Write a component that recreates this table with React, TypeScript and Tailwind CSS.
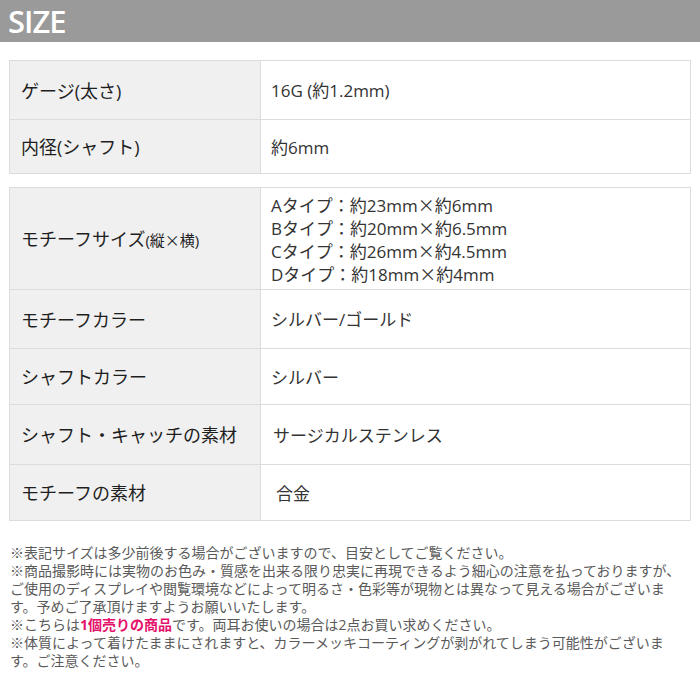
import React from "react";

const font = { fontFamily: "'Open Sans', 'Noto Sans CJK JP', sans-serif" };

const X = () => <span className="font-['Noto_Sans_CJK_JP',sans-serif]">×</span>;

type Row = { label: React.ReactNode; value: React.ReactNode; h: string; vp?: string };

const rows1: Row[] = [
  { label: "ゲージ(太さ)", value: "16G (約1.2mm)", h: "h-[58px]" },
  { label: "内径(シャフト)", value: "約6mm", h: "h-[54px]" },
];

const rows2: Row[] = [
  {
    label: (
      <>
        モチーフサイズ<span className="text-[15px]">(縦<X />横)</span>
      </>
    ),
    value: (
      <div className="leading-[22px]">
        <div>Aタイプ：約23mm<X />約6mm</div>
        <div>Bタイプ：約20mm<X />約6.5mm</div>
        <div>Cタイプ：約26mm<X />約4.5mm</div>
        <div>Dタイプ：約18mm<X />約4mm</div>
      </div>
    ),
    h: "h-[101px]",
  },
  { label: "モチーフカラー", value: "シルバー/ゴールド", h: "h-[59px]" },
  { label: "シャフトカラー", value: "シルバー", h: "h-[56px]" },
  { label: "シャフト・キャッチの素材", value: "サージカルステンレス", h: "h-[60px]", vp: "pl-[12px]" },
  { label: "モチーフの素材", value: "合金", h: "h-[56px]", vp: "pl-[15px]" },
];

function Table({ rows }: { rows: Row[] }) {
  return (
    <div className="mx-[9px] border border-[#dcdcdc]">
      {rows.map((r, i) => (
        <div
          key={i}
          className={`flex ${r.h} ${i > 0 ? "border-t border-[#dcdcdc]" : ""}`}
        >
          <div className="w-[251px] shrink-0 bg-[#f0f0f0] border-r border-[#dcdcdc] flex items-center pl-[11px] pt-[2px] text-[18px] font-normal text-[#1e1e1e] whitespace-nowrap">
            <span>{r.label}</span>
          </div>
          <div className={`flex-1 flex items-center ${r.vp ?? "pl-[10px]"} pt-[2px] text-[17px] text-[#333]`}>
            {r.value}
          </div>
        </div>
      ))}
    </div>
  );
}

export default function App() {
  return (
    <div className="w-[700px] h-[700px] bg-white" style={font}>
      <div className="h-[42px] bg-[#9a9a9a] flex items-center pl-[8px]">
        <span className="text-white text-[31px] font-semibold tracking-[-1px] leading-none">SIZE</span>
      </div>
      <div className="mt-[18px]">
        <Table rows={rows1} />
      </div>
      <div className="mt-[13px]">
        <Table rows={rows2} />
      </div>
      <div className="mt-[23px] pl-[10px] text-[14px] leading-[18px] text-[#5a5a5a] whitespace-nowrap">
        <div>※表記サイズは多少前後する場合がございますので、目安としてご覧ください。</div>
        <div>※商品撮影時には実物のお色み・質感を出来る限り忠実に再現できるよう細心の注意を払っておりますが、</div>
        <div>ご使用のディスプレイや閲覧環境などによって明るさ・色彩等が現物とは異なって見える場合がございま</div>
        <div>す。予めご了承頂けますようお願いいたします。</div>
        <div>
          ※こちらは<span className="text-[#e4126b] font-bold">1個売りの商品</span>です。両耳お使いの場合は2点お買い求めください。
        </div>
        <div>※体質によって着けたままにされますと、カラーメッキコーティングが剥がれてしまう可能性がございま</div>
        <div>す。ご注意ください。</div>
      </div>
    </div>
  );
}
